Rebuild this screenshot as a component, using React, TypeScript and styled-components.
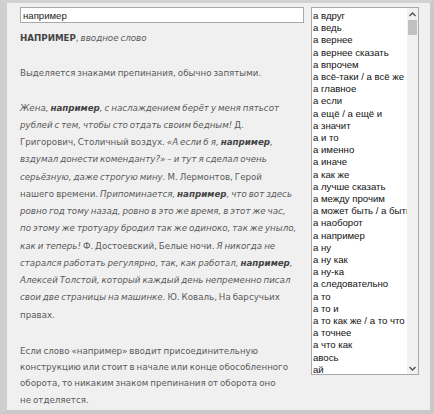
import React, { useState } from 'react';
import styled, { createGlobalStyle } from 'styled-components';

const GlobalStyle = createGlobalStyle`
  html, body {
    margin: 0;
    padding: 0;
    background: #d9d9d9;
  }
`;

const words = [
  'а вдруг',
  'а ведь',
  'а вернее',
  'а вернее сказать',
  'а впрочем',
  'а всё-таки / а всё же',
  'а главное',
  'а если',
  'а ещё / а ещё и',
  'а значит',
  'а и то',
  'а именно',
  'а иначе',
  'а как же',
  'а лучше сказать',
  'а между прочим',
  'а может быть / а быть может',
  'а наоборот',
  'а например',
  'а ну',
  'а ну как',
  'а ну-ка',
  'а следовательно',
  'а то',
  'а то и',
  'а то как же / а то что ж',
  'а точнее',
  'а что как',
  'авось',
  'ай',
];

const App: React.FC = () => {
  const [query, setQuery] = useState('например');

  return (
    <>
      <GlobalStyle />
      <Frame>
        <Article>
          <SearchInput
            value={query}
            onChange={(e) => setQuery(e.target.value)}
          />
          <Heading>
            <b>НАПРИМЕР</b>, <i>вводное слово</i>
          </Heading>
          <Paragraph>Выделяется знаками препинания, обычно запятыми.</Paragraph>
          <Paragraph>
            <i>
              Жена, <b>например</b>, с наслаждением берёт у меня пятьсот рублей
              с тем, чтобы сто отдать своим бедным!
            </i>{' '}
            Д. Григорович, Столичный воздух.{' '}
            <i>
              «А если б я, <b>например</b>, вздумал донести коменданту?» – и тут
              я сделал очень серьёзную, даже строгую мину.
            </i>{' '}
            М. Лермонтов, Герой нашего времени.{' '}
            <i>
              Припоминается, <b>например</b>, что вот здесь ровно год тому
              назад, ровно в это же время, в этот же час, по этому же тротуару
              бродил так же одиноко, так же уныло, как и теперь!
            </i>{' '}
            Ф. Достоевский, Белые ночи.{' '}
            <i>
              Я никогда не старался работать регулярно, так, как работал,{' '}
              <b>например</b>, Алексей Толстой, который каждый день непременно
              писал свои две страницы на машинке.
            </i>{' '}
            Ю. Коваль, На барсучьих правах.
          </Paragraph>
          <Paragraph $last>
            Если слово «например» вводит присоединительную конструкцию или
            стоит в начале или конце обособленного оборота, то никаким знаком
            препинания от оборота оно не{'\u00a0'}отделяется.
          </Paragraph>
        </Article>
        <ListBox>
          <Items>
            {words.map((w) => (
              <Item key={w}>{w}</Item>
            ))}
          </Items>
          <ScrollBar>
            <Arrow>
              <svg width="7" height="5" viewBox="0 0 7 5">
                <path d="M0.5 4 L3.5 1 L6.5 4" fill="none" stroke="#505050" strokeWidth="1.4" />
              </svg>
            </Arrow>
            <Thumb />
            <Track />
            <Arrow>
              <svg width="7" height="5" viewBox="0 0 7 5">
                <path d="M0.5 1 L3.5 4 L6.5 1" fill="none" stroke="#505050" strokeWidth="1.4" />
              </svg>
            </Arrow>
          </ScrollBar>
        </ListBox>
      </Frame>
    </>
  );
};

export default App;

const Frame = styled.div`
  box-sizing: border-box;
  width: 434px;
  height: 414px;
  display: flex;
  align-items: flex-start;
  gap: 7px;
  padding: 4px 0 0 13px;
  border-top: 3px solid #d2d2d2;
  border-left: 7px solid #cfcfcf;
  border-right: 4px solid #c9c9c9;
  border-bottom: 4px solid #c9c9c9;
  background: #f0f0f0;
  overflow: hidden;
`;

const Article = styled.div`
  width: 284px;
  flex-shrink: 0;
  font-family: 'DejaVu Sans', Verdana, sans-serif;
  font-size: 8.7px;
  line-height: 17.25px;
  word-spacing: -0.8px;
  color: #5a5a5a;
  b {
    color: #444;
  }
`;

const SearchInput = styled.input`
  box-sizing: border-box;
  display: block;
  width: 284px;
  height: 16px;
  margin: 0 0 6.5px;
  padding: 0 2px;
  border: 1px solid #a9a9a9;
  background: #fff;
  font-family: 'Liberation Sans', Arial, sans-serif;
  font-size: 9.6px;
  color: #222;
  outline: none;
`;

const Heading = styled.div`
  margin: 0 0 17.75px;
`;

const Paragraph = styled.p<{ $last?: boolean }>`
  width: 277px;
  margin: ${(p) => (p.$last ? '19px 0 0' : '0 0 17.75px')};
  line-height: ${(p) => (p.$last ? '16.3px' : 'inherit')};
`;

const ListBox = styled.div`
  box-sizing: border-box;
  width: 108px;
  height: 368px;
  flex-shrink: 0;
  display: flex;
  border: 1px solid #a9a9a9;
  background: #fff;
  overflow: hidden;
`;

const Items = styled.div`
  flex: 1;
  min-width: 0;
  padding: 2px 0 0 1px;
  overflow: hidden;
`;

const Item = styled.div`
  font-family: 'Liberation Sans', Arial, sans-serif;
  font-size: 9.6px;
  line-height: 12.2px;
  color: #111;
  white-space: nowrap;
`;

const ScrollBar = styled.div`
  width: 11px;
  flex-shrink: 0;
  display: flex;
  flex-direction: column;
  background: #f1f1f1;
`;

const Arrow = styled.div`
  height: 12px;
  display: flex;
  align-items: center;
  justify-content: center;
`;

const Thumb = styled.div`
  height: 15px;
  margin: 0 1px;
  background: #c1c1c1;
`;

const Track = styled.div`
  flex: 1;
`;
